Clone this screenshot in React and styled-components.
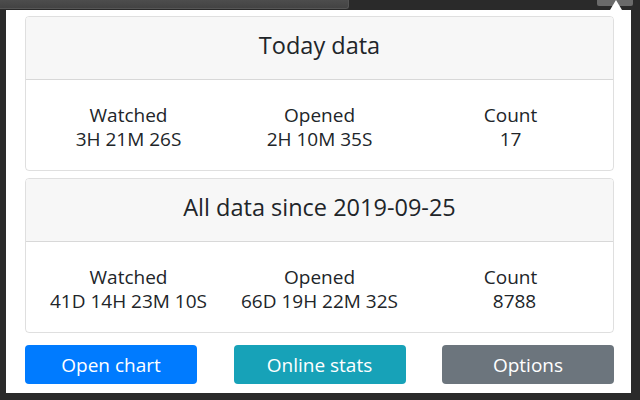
import React from 'react'
import styled, { createGlobalStyle } from 'styled-components'

const GlobalStyle = createGlobalStyle`
  html, body {
    margin: 0;
    padding: 0;
    background: #2a2a2a;
  }
  body {
    font-family: "Open Sans", "Noto Sans", sans-serif;
    color: #212529;
  }
`

const today = {
  title: 'Today data',
  stats: [
    { label: 'Watched', value: '3H 21M 26S' },
    { label: 'Opened', value: '2H 10M 35S' },
    { label: 'Count', value: '17' },
  ],
}

const allTime = {
  title: 'All data since 2019-09-25',
  stats: [
    { label: 'Watched', value: '41D 14H 23M 10S' },
    { label: 'Opened', value: '66D 19H 22M 32S' },
    { label: 'Count', value: '8788', shift: 4 },
  ],
}

function StatCard({ data }) {
  return (
    <Card>
      <CardHeader>{data.title}</CardHeader>
      <CardBody>
        {data.stats.map((s) => (
          <Stat key={s.label}>
            <div>{s.label}</div>
            <Value $shift={s.shift}>{s.value}</Value>
          </Stat>
        ))}
      </CardBody>
    </Card>
  )
}

export default function App() {
  return (
    <>
      <GlobalStyle />
      <Frame>
        <TopBar>
          <Tab />
          <Spacer />
          <ExtButton />
        </TopBar>
        <Popup>
          <StatCard data={today} />
          <StatCard data={allTime} />
          <Buttons>
            <Button $bg="#007bff">Open chart</Button>
            <Button $bg="#17a2b8">Online stats</Button>
            <Button $bg="#6c757d">Options</Button>
          </Buttons>
        </Popup>
      </Frame>
    </>
  )
}

const Frame = styled.div`
  width: 640px;
  height: 400px;
  overflow: hidden;
  display: flex;
  flex-direction: column;
`

const TopBar = styled.div`
  height: 10px;
  display: flex;
  align-items: flex-start;
`

const Tab = styled.div`
  width: 348px;
  height: 8px;
  background: linear-gradient(#4d4d4d, #434343);
  border-bottom: 1px solid #555;
  border-right: 1px solid #555;
  border-bottom-right-radius: 3px;
`

const Spacer = styled.div`
  flex: 1;
`

const ExtButton = styled.div`
  position: relative;
  width: 36px;
  height: 6px;
  margin-right: 7px;
  background: #6a6a6a;
  border-bottom-left-radius: 2px;
  border-bottom-right-radius: 2px;

  &::after {
    content: '';
    position: absolute;
    left: 13px;
    top: 0;
    border-left: 6px solid transparent;
    border-right: 6px solid transparent;
    border-bottom: 10px solid #fff;
  }
`

const Popup = styled.div`
  width: 625px;
  height: 383px;
  margin-left: 6px;
  box-sizing: border-box;
  background: #fff;
  padding: 6px 17px 0 19px;
  display: flex;
  flex-direction: column;
  gap: 7px;
`

const Card = styled.div`
  border: 1px solid rgba(0, 0, 0, 0.125);
  border-radius: 4px;
  overflow: hidden;
`

const CardHeader = styled.div`
  height: 63px;
  box-sizing: border-box;
  padding-bottom: 6px;
  display: flex;
  align-items: center;
  justify-content: center;
  background: #f7f7f7;
  border-bottom: 1px solid rgba(0, 0, 0, 0.125);
  font-size: 23.5px;
`

const CardBody = styled.div`
  display: grid;
  grid-template-columns: repeat(3, 1fr);
  padding: 23px 7px 19px;
  font-size: 19px;
  line-height: 24px;
  text-align: center;
`

const Stat = styled.div`
  display: flex;
  flex-direction: column;
`

const Value = styled.div`
  padding-left: ${(p) => (p.$shift ? p.$shift * 2 : 0)}px;
`

const Buttons = styled.div`
  display: flex;
  justify-content: space-between;
  margin-top: 5px;
`

const Button = styled.button`
  width: 172px;
  height: 39px;
  border: none;
  border-radius: 4px;
  background: ${(p) => p.$bg};
  color: #fff;
  font-family: inherit;
  font-size: 19px;
  padding: 0;
`
